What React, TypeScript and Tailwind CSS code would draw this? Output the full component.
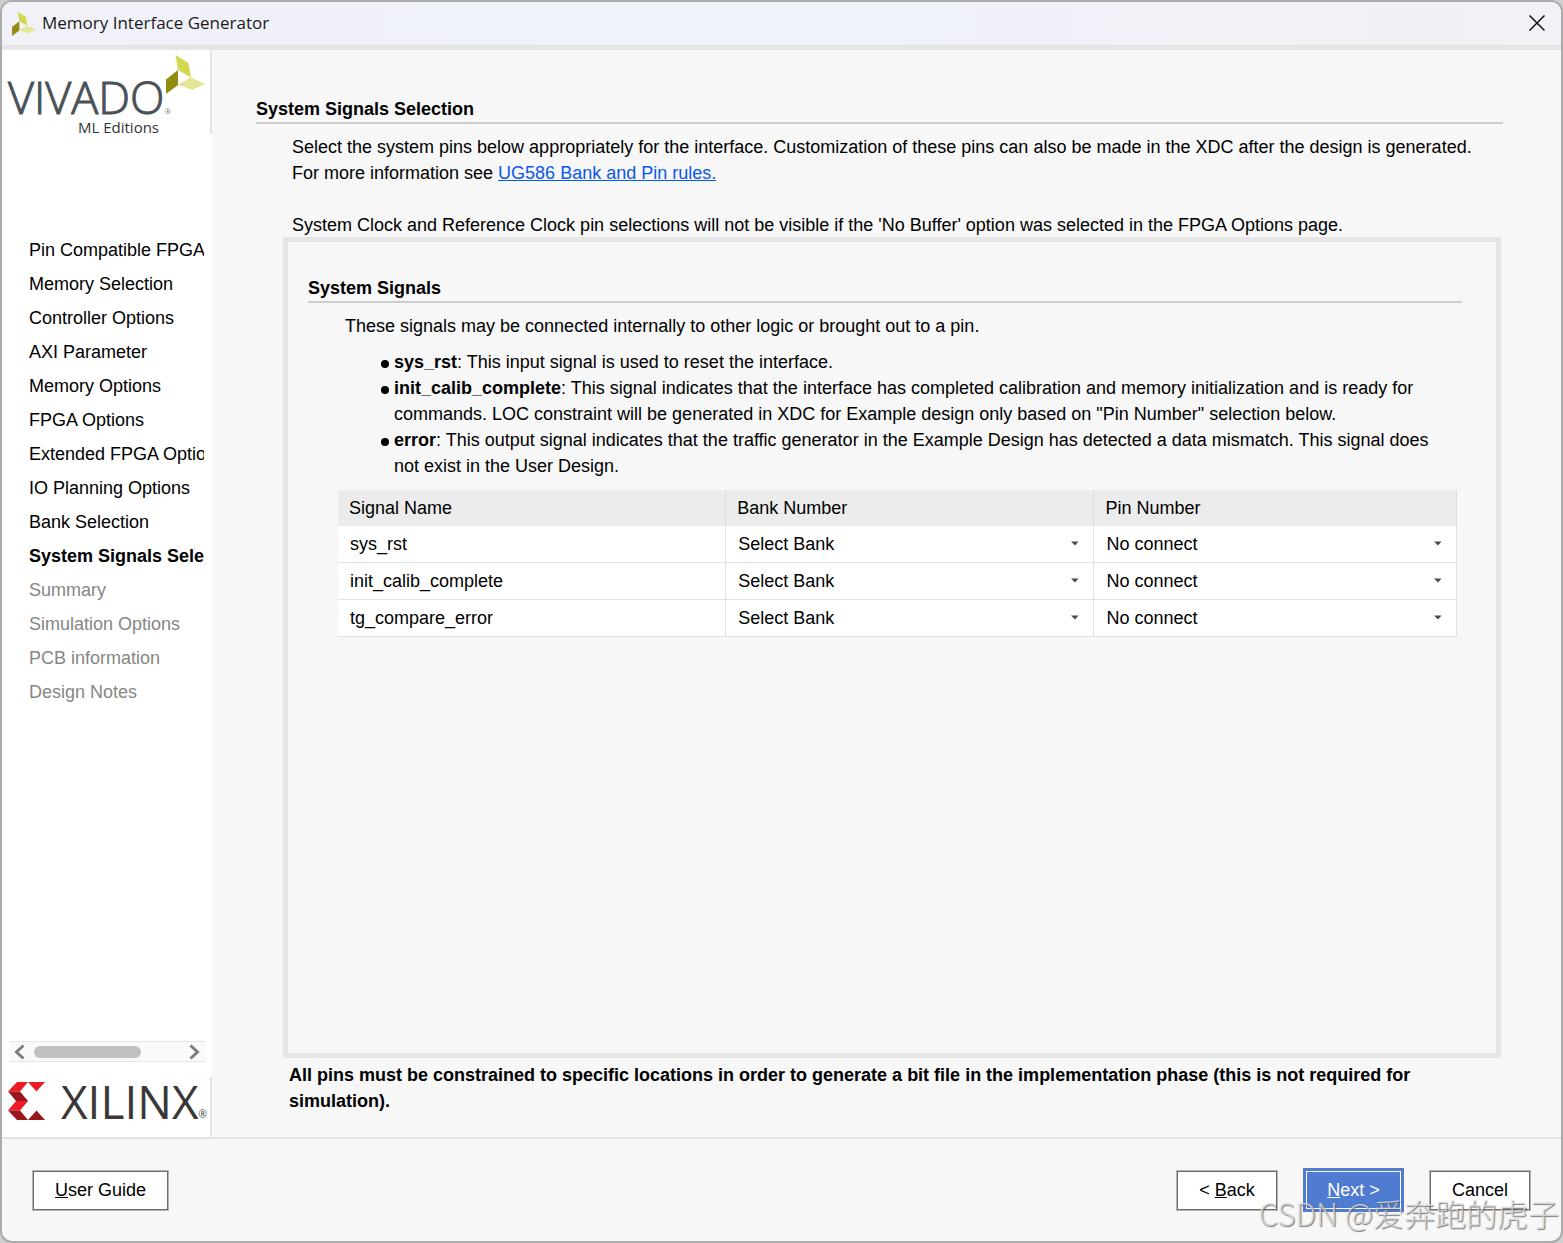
import { ReactNode } from 'react';

type Step = { label: string; state: 'done' | 'current' | 'todo' };

const steps: Step[] = [
  { label: 'Pin Compatible FPGA', state: 'done' },
  { label: 'Memory Selection', state: 'done' },
  { label: 'Controller Options', state: 'done' },
  { label: 'AXI Parameter', state: 'done' },
  { label: 'Memory Options', state: 'done' },
  { label: 'FPGA Options', state: 'done' },
  { label: 'Extended FPGA Options', state: 'done' },
  { label: 'IO Planning Options', state: 'done' },
  { label: 'Bank Selection', state: 'done' },
  { label: 'System Signals Selection', state: 'current' },
  { label: 'Summary', state: 'todo' },
  { label: 'Simulation Options', state: 'todo' },
  { label: 'PCB information', state: 'todo' },
  { label: 'Design Notes', state: 'todo' },
];

const stepStyles = {
  done: 'text-black',
  current: 'text-black font-bold',
  todo: 'text-[#868686]',
};

const signals = ['sys_rst', 'init_calib_complete', 'tg_compare_error'];

const VivadoMark = ({ className }: { className: string }) => (
  <svg viewBox="0 0 39 36" className={className} aria-hidden="true">
    <path d="M9.500 0 L22.500 8 L25 22.500 L12 15 Z" fill="#d3d84f" />
    <path d="M0 24.500 L12 15 V30 L0 39 Z" fill="#948c12" />
    <path d="M12 29.500 L25 22.500 L39 29 L26 35 Z" fill="#e5e695" />
  </svg>
);

const XilinxMark = () => (
  <svg viewBox="0 0 37 38" className="h-[38px] w-[37px]" aria-hidden="true">
    <path d="M9 0 H20 L12 9.500 H0 Z" fill="#ed1c24" />
    <path d="M20 0 H37 L28.500 9.500 Z" fill="#ed1c24" />
    <path d="M0 9.500 H12 L20 19 H8 Z" fill="#98171e" />
    <path d="M8 19 H20 L12 28.500 H0 Z" fill="#ed1c24" />
    <path d="M0 28.500 H12 L20 38 H9 Z" fill="#98171e" />
    <path d="M28.500 28.500 L37 38 H20 Z" fill="#98171e" />
  </svg>
);

const TitleBar = () => (
  <header className="flex h-12 shrink-0 items-center justify-between border-b-5 border-[#e6e6e6] bg-linear-to-r from-[#f1f1f8] via-[#eff2f9] to-[#f3f0f7] pr-4 pb-0.5 pl-2.5">
    <div className="flex items-center gap-1.5">
      <VivadoMark className="h-6 w-6 overflow-visible" />
      <h1 className="font-['Open_Sans','Noto_Sans',sans-serif] text-[17px] leading-6 text-[#1a1a1a]">
        Memory Interface Generator
      </h1>
    </div>
    <button type="button" aria-label="Close" className="flex h-[17px] w-[17px] items-center justify-center">
      <svg viewBox="0 0 16 16" className="h-4 w-4" stroke="#111" strokeWidth="1.5" aria-hidden="true">
        <path d="M0.500 0.500 L15.500 15.500 M15.500 0.500 L0.500 15.500" />
      </svg>
    </button>
  </header>
);

const Sidebar = () => (
  <aside className="flex w-[210px] shrink-0 flex-col bg-white">
    <div className="relative h-[84px] border-r-2 border-[#e4e4e4] pt-6 pl-1.5">
      <VivadoMark className="absolute top-[5px] right-[5px] h-9 w-[39px] overflow-visible" />
      <div className="flex items-end font-['Open_Sans','Noto_Sans',sans-serif] font-light text-[#4b5257]">
        <span className="text-[45px] leading-[45px] [-webkit-text-stroke:1px_#4b5257]">VIVADO</span>
        <span className="text-[8px] leading-4">®</span>
      </div>
      <div className="pl-[70px] font-['Open_Sans','Noto_Sans',sans-serif] text-[15px] leading-4 text-[#333]">
        ML Editions
      </div>
    </div>

    <nav className="mt-[99px] mr-2 ml-[27px] flex-1 overflow-hidden">
      <ol>
        {steps.map(step => (
          <li
            key={step.label}
            aria-current={step.state === 'current' ? 'step' : undefined}
            className={`leading-[34px] whitespace-nowrap ${stepStyles[step.state]}`}
          >
            {step.label}
          </li>
        ))}
      </ol>
    </nav>

    <div className="mr-[7px] ml-[7px] flex h-[21px] items-center border-y border-[#e4e4e4] bg-[#fafafa] px-[5px]">
      <button type="button" aria-label="Scroll left">
        <svg viewBox="0 0 11 16" className="h-4 w-[11px]" fill="none" stroke="#7d7d7d" strokeWidth="3" aria-hidden="true">
          <path d="M9.500 1.500 L2.500 8 L9.500 14.500" />
        </svg>
      </button>
      <div className="mx-[9px] flex-1">
        <div className="h-3 w-[107px] rounded-full bg-[#c1c1c1]" />
      </div>
      <button type="button" aria-label="Scroll right">
        <svg viewBox="0 0 11 16" className="h-4 w-[11px]" fill="none" stroke="#7d7d7d" strokeWidth="3" aria-hidden="true">
          <path d="M1.500 1.500 L8.500 8 L1.500 14.500" />
        </svg>
      </button>
    </div>

    <div className="mt-[15px] flex h-[60px] items-start border-r-2 border-[#e4e4e4] pt-[5px] pl-1.5">
      <XilinxMark />
      <div className="ml-4 flex items-end font-['Open_Sans','Noto_Sans',sans-serif] text-[#3a3937]">
        <span className="text-[46px] leading-[38px]">XILINX</span>
        <span className="text-[10px] leading-3">®</span>
      </div>
    </div>
  </aside>
);

const SectionTitle = ({ children }: { children: ReactNode }) => (
  <h2 className="border-b-2 border-[#cdcdcd] font-bold">{children}</h2>
);

const CellSelect = ({ label, value }: { label: string; value: string }) => (
  <div className="relative">
    <select aria-label={label} defaultValue={value} className="h-9 w-full appearance-none bg-white px-3 outline-none">
      <option>{value}</option>
    </select>
    <svg viewBox="0 0 8 5" className="pointer-events-none absolute top-[15px] right-3.5 h-[5px] w-2" aria-hidden="true">
      <path d="M0 0.500 H7.500 L4 4.500 Z" fill="#4a4a4a" />
    </svg>
  </div>
);

const SignalTable = () => (
  <table className="w-full table-fixed border-separate border-spacing-0">
    <colgroup>
      <col className="w-[34.700%]" />
      <col className="w-[32.900%]" />
      <col />
    </colgroup>
    <thead>
      <tr className="bg-[#ececec] text-left">
        {['Signal Name', 'Bank Number', 'Pin Number'].map(name => (
          <th key={name} scope="col" className="h-9 border-r border-[#dcdcdc] px-[11px] font-normal">
            {name}
          </th>
        ))}
      </tr>
    </thead>
    <tbody className="bg-white">
      {signals.map(signal => (
        <tr key={signal}>
          <td className="h-[37px] border-r border-b border-[#e2e2e2] px-3">{signal}</td>
          <td className="border-r border-b border-[#e2e2e2]">
            <CellSelect label={`Bank number for ${signal}`} value="Select Bank" />
          </td>
          <td className="border-r border-b border-[#e2e2e2]">
            <CellSelect label={`Pin number for ${signal}`} value="No connect" />
          </td>
        </tr>
      ))}
    </tbody>
  </table>
);

const Bullet = ({ name, children }: { name: string; children: ReactNode }) => (
  <li className="flex gap-[5px]">
    <span className="mt-[11px] h-2 w-2 shrink-0 rounded-full bg-black" />
    <p>
      <b>{name}</b>: {children}
    </p>
  </li>
);

const Content = () => (
  <main className="flex min-w-0 flex-1 flex-col pt-[46px] pr-[58px] pb-[23px] pl-11">
    <SectionTitle>System Signals Selection</SectionTitle>
    <div className="-mb-px pt-2.5 pl-9">
      <p>
        Select the system pins below appropriately for the interface. Customization of these pins can also be made in
        the XDC after the design is generated. For more information see{' '}
        <a href="#ug586" className="text-[#0a57f0] underline">
          UG586 Bank and Pin rules.
        </a>
      </p>
      <p className="mt-[26px]">
        System Clock and Reference Clock pin selections will not be visible if the 'No Buffer' option was selected in
        the FPGA Options page.
      </p>
    </div>

    <section className="mr-0.5 ml-[27px] flex-1 border-5 border-[#e6e6e6] pt-[33px] pr-[34px] pb-8 pl-5">
      <SectionTitle>System Signals</SectionTitle>
      <p className="mt-2.5 pl-[37px]">
        These signals may be connected internally to other logic or brought out to a pin.
      </p>
      <ul className="mt-2.5 mb-[11px] pr-4 pl-[73px]">
        <Bullet name="sys_rst">This input signal is used to reset the interface.</Bullet>
        <Bullet name="init_calib_complete">
          This signal indicates that the interface has completed calibration and memory initialization and is ready for
          commands. LOC constraint will be generated in XDC for Example design only based on "Pin Number" selection
          below.
        </Bullet>
        <Bullet name="error">
          This output signal indicates that the traffic generator in the Example Design has detected a data mismatch.
          This signal does not exist in the User Design.
        </Bullet>
      </ul>
      <div className="mr-[5px] ml-[30px]">
        <SignalTable />
      </div>
    </section>

    <p className="mt-1 pl-[33px] font-bold">
      All pins must be constrained to specific locations in order to generate a bit file in the implementation phase
      (this is not required for simulation).
    </p>
  </main>
);

const plainButton = 'h-[41px] border border-[#b4b4b4] bg-white inset-ring inset-ring-[#6c6c6c]';

const Footer = () => (
  <footer className="flex h-[104px] shrink-0 items-center border-t-2 border-[#e4e4e4] px-[30px]">
    <button type="button" className={`${plainButton} w-[137px]`}>
      <u>U</u>ser Guide
    </button>
    <div className="ml-auto flex items-center gap-[25px]">
      <button type="button" className={`${plainButton} w-[102px]`}>
        &lt; <u>B</u>ack
      </button>
      <button type="button" className="h-11 w-[101px] border-3 border-[#4f7bd0] bg-[#4f7bd0] text-white">
        <span className="flex h-full items-center justify-center border border-white">
          <span>
            <u>N</u>ext &gt;
          </span>
        </span>
      </button>
      <button type="button" className={`${plainButton} w-[102px]`}>
        Cancel
      </button>
    </div>
  </footer>
);

const App = () => (
  <div className="relative flex min-h-screen flex-col bg-[#cfcfcf] font-['Liberation_Sans',Arial,sans-serif] text-[18px] leading-[26px] text-black">
    <div className="flex flex-1 flex-col overflow-hidden rounded-[12px] border-2 border-[#ababab] bg-[#f7f7f7]">
      <TitleBar />
      <div className="flex flex-1">
        <Sidebar />
        <Content />
      </div>
      <Footer />
    </div>
    <div className="pointer-events-none absolute right-1 bottom-2.5 font-['Noto_Sans_CJK_SC',sans-serif] text-[31px] leading-10 font-light text-[#dedede]/80 [text-shadow:1px_1px_1px_rgba(90,90,90,0.8)]">
      CSDN @爱奔跑的虎子
    </div>
  </div>
);

export default App;
